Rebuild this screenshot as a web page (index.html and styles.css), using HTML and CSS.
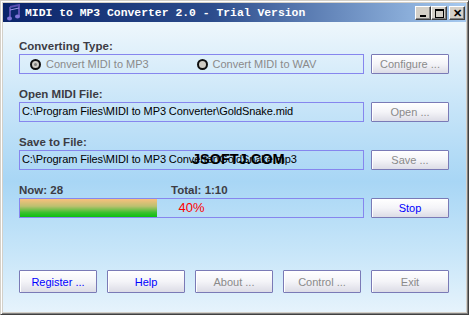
FILE: index.html
```html
<!DOCTYPE html>
<html lang="en">
<head>
  <meta charset="UTF-8">
  <title>MIDI to MP3 Converter 2.0 - Trial Version</title>
  <link rel="stylesheet" href="styles.css">
</head>
<body>
  <div class="window">
    <!-- Title bar -->
    <div class="titlebar">
      <svg class="app-icon" width="14" height="17" viewBox="0 0 14 17">
        <path d="M3 3 L12 1 L12 12" stroke="#5a4fb0" stroke-width="2" fill="none"/>
        <path d="M3 3 L3 14" stroke="#5a4fb0" stroke-width="2"/>
        <ellipse cx="2.5" cy="14.5" rx="2.5" ry="2" fill="#7f74d8"/>
        <ellipse cx="10.5" cy="12.5" rx="2.5" ry="2" fill="#7f74d8"/>
        <path d="M3 6 L12 4" stroke="#9c92e8" stroke-width="1"/>
      </svg>
      <span class="title">MIDI to MP3 Converter 2.0 - Trial Version</span>
      <div class="caption-buttons">
        <div class="cap-btn"><span class="glyph-min"></span></div>
        <div class="cap-btn"><span class="glyph-max"></span></div>
        <div class="cap-btn close"><span class="glyph-close">&#x2715;</span></div>
      </div>
    </div>

    <!-- Client area -->
    <div class="client">
      <div class="field">
        <div class="label">Converting Type:</div>
        <div class="row">
          <div class="box radio-group">
            <span class="radio checked"><span class="dot"></span>Convert MIDI to MP3</span>
            <span class="radio"><span class="dot"></span>Convert MIDI to WAV</span>
          </div>
          <button class="btn disabled">Configure ...</button>
        </div>
      </div>

      <div class="field">
        <div class="label">Open MIDI File:</div>
        <div class="row">
          <div class="box path">C:\Program Files\MIDI to MP3 Converter\GoldSnake.mid</div>
          <button class="btn disabled">Open ...</button>
        </div>
      </div>

      <div class="field">
        <div class="label">Save to File:</div>
        <div class="row">
          <div class="box path">C:\Program Files\MIDI to MP3 Converter\GoldSnake.mp3<span class="watermark">JSOFTJ.COM</span></div>
          <button class="btn disabled">Save ...</button>
        </div>
      </div>

      <div class="field">
        <div class="label split"><span class="now">Now: 28</span><span>Total: 1:10</span></div>
        <div class="row">
          <div class="box progress">
            <div class="fill" style="width: 40%"></div>
            <span class="pct">40%</span>
          </div>
          <button class="btn active">Stop</button>
        </div>
      </div>

      <div class="bottom-buttons">
        <button class="btn big active">Register ...</button>
        <button class="btn big active">Help</button>
        <button class="btn big disabled">About ...</button>
        <button class="btn big disabled">Control ...</button>
        <button class="btn big disabled">Exit</button>
      </div>
    </div>
  </div>
</body>
</html>
```
FILE: styles.css
```css
/* Page */
body {
  margin: 0;
  padding: 0;
  font-family: 'Liberation Sans', Arial, sans-serif;
  font-size: 11px;
  background: #d4d0c8;
}

/* Window frame */
.window {
  width: 469px;
  height: 315px;
  box-sizing: border-box;
  background: #d4d0c8;
  border-top: 1px solid #d4d0c8;
  border-left: 1px solid #d4d0c8;
  border-right: 1px solid #404040;
  border-bottom: 1px solid #404040;
  box-shadow: inset 1px 1px 0 #ffffff, inset -1px -1px 0 #808080;
  padding: 2px;
  display: flex;
  flex-direction: column;
}

/* Title bar */
.titlebar {
  height: 19px;
  background: linear-gradient(to right, #0a246a, #2c4c8c 45%, #a6caf0);
  display: flex;
  align-items: center;
  padding-left: 4px;
}

.app-icon {
  margin-right: 4px;
}

.title {
  font-family: 'Liberation Mono', monospace;
  font-weight: bold;
  font-size: 11.4px;
  color: white;
}

.caption-buttons {
  margin-left: auto;
  display: flex;
  margin-right: 1px;
}

.cap-btn {
  width: 16px;
  height: 14px;
  box-sizing: border-box;
  background: #d4d0c8;
  border-top: 1px solid #ffffff;
  border-left: 1px solid #ffffff;
  border-right: 1px solid #404040;
  border-bottom: 1px solid #404040;
  box-shadow: inset -1px -1px 0 #808080;
  position: relative;
}

.cap-btn.close {
  margin-left: 2px;
}

.glyph-min {
  position: absolute;
  left: 4px;
  top: 8px;
  width: 6px;
  height: 2px;
  background: black;
}

.glyph-max {
  position: absolute;
  left: 3px;
  top: 2px;
  width: 7px;
  height: 6px;
  border: 1px solid black;
  border-top-width: 2px;
}

.glyph-close {
  position: absolute;
  left: 3px;
  top: -1px;
  font-size: 11px;
  font-weight: bold;
  line-height: 14px;
  color: black;
}

/* Client area */
.client {
  flex: 1;
  background: linear-gradient(to bottom, #eef7fc 0%, #c6e4f8 30%, #a8d6f5 55%, #c8e6f9 80%, #e6f3fc 100%);
  padding: 17px 0 0 16px;
}

.field {
  margin-bottom: 13px;
}

.label {
  font-weight: bold;
  font-size: 11.5px;
  color: #3c3c44;
  line-height: 15px;
  height: 15px;
}

.label.split {
  display: flex;
}

.label .now {
  width: 152px;
}

.row {
  display: grid;
  grid-template-columns: 345px 78px;
  column-gap: 7px;
  height: 20px;
}

.box {
  box-sizing: border-box;
  height: 20px;
  border: 1px solid #8686ee;
  position: relative;
}

.path {
  line-height: 17px;
  padding-left: 2px;
  color: black;
  letter-spacing: -0.1px;
  white-space: nowrap;
  overflow: hidden;
}

.watermark {
  position: absolute;
  left: 172px;
  top: 0;
  font-weight: bold;
  font-size: 14.5px;
  letter-spacing: 0;
  color: black;
  line-height: 17px;
}

/* Radio buttons */
.radio-group {
  display: flex;
  align-items: center;
  padding-left: 10px;
}

.radio {
  display: flex;
  align-items: center;
  color: #8a8a8a;
  width: 169px;
}

.dot {
  width: 11px;
  height: 11px;
  box-sizing: border-box;
  border-radius: 50%;
  border: 2px solid #101010;
  background: #cfccc4;
  margin-right: 5px;
  position: relative;
}

.radio.checked .dot::after {
  content: "";
  position: absolute;
  left: 2px;
  top: 2px;
  width: 3px;
  height: 3px;
  border-radius: 50%;
  background: #808080;
}

/* Progress bar */
.progress {
  display: flex;
  align-items: stretch;
}

.fill {
  background: linear-gradient(to bottom, #f8c07c, #bcc070 40%, #3cc030 75%, #0cc010);
}

.pct {
  position: absolute;
  left: 0;
  right: 0;
  top: 0;
  text-align: center;
  line-height: 18px;
  font-size: 13px;
  color: #ff0000;
}

/* Buttons */
.btn {
  font-family: 'Liberation Sans', Arial, sans-serif;
  font-size: 11px;
  height: 20px;
  box-sizing: border-box;
  padding: 0;
  border: 1px solid #7a7ab6;
  border-radius: 1px;
  background: linear-gradient(to bottom, #ffffff, #f4f4f8 50%, #dcdce6);
  box-shadow: inset 1px 1px 0 #ffffff;
}

.btn.disabled {
  color: #8a8a8a;
}

.btn.active {
  color: #0000ff;
}

.bottom-buttons {
  display: flex;
  gap: 10px;
  margin-top: 52px;
}

.btn.big {
  width: 78px;
  height: 23px;
}
```
